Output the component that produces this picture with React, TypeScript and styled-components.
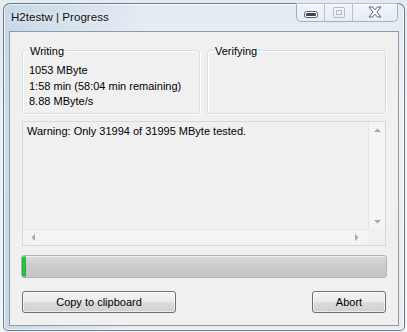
import React from "react";
import styled, { createGlobalStyle } from "styled-components";

const FONT = `"Liberation Sans", Arial, sans-serif`;

const Global = createGlobalStyle`
  html, body { margin: 0; padding: 0; }
  body {
    background: linear-gradient(180deg, #e4eaf0 0%, #eef1f4 40%, #f2f4f6 100%);
    font-family: ${FONT};
    font-size: 11px;
    color: #000;
  }
`;

const Page = styled.div`
  width: 407px;
  height: 332px;
  padding: 3px 0 0 3px;
  box-sizing: border-box;
  overflow: hidden;
`;

const Win = styled.div`
  width: 402px;
  height: 328px;
  box-sizing: border-box;
  border: 1px solid rgba(70, 85, 100, 0.75);
  border-radius: 7px 7px 5px 5px;
  background:
    linear-gradient(90deg, rgba(170, 195, 220, 0.5) 0%, rgba(255, 255, 255, 0) 35%),
    linear-gradient(180deg, #e3ebf3 0%, #edf2f7 30%, #e8eef4 100%);
  box-shadow: inset 0 0 0 1px rgba(255, 255, 255, 0.7);
  padding: 0 5px 4px 5px;
  display: flex;
  flex-direction: column;
`;

const TitleBar = styled.div`
  height: 27px;
  display: flex;
  justify-content: space-between;
  align-items: flex-start;
`;

const Title = styled.div`
  margin-left: 2px;
  line-height: 26px;
  font-size: 11.6px;
  color: #111;
  text-shadow: 0 0 6px rgba(255, 255, 255, 0.9);
`;

const CaptionGroup = styled.div`
  display: flex;
  height: 18px;
  margin-right: 1px;
  margin-top: -1px;
  border: 1px solid #a7b1bc;
  border-top: none;
  border-radius: 0 0 5px 5px;
  overflow: hidden;
  background: linear-gradient(180deg, rgba(255,255,255,0.5), rgba(230,238,246,0.6));
`;

const CapBtn = styled.div<{ $w: number; $sep?: boolean }>`
  width: ${(p) => p.$w}px;
  box-sizing: border-box;
  height: 100%;
  display: flex;
  align-items: center;
  justify-content: center;
  border-left: ${(p) => (p.$sep ? "1px solid #b8c1cb" : "none")};
`;

const Client = styled.div`
  flex: 1;
  background: #f0f0f0;
  border: 1px solid #8e9aa6;
  padding: 11px 12px 12px 12px;
  display: flex;
  flex-direction: column;
`;

const Groups = styled.div`
  display: grid;
  grid-template-columns: 178px 179px;
  column-gap: 7px;
`;

const Group = styled.fieldset`
  margin: 0;
  height: 71px;
  box-sizing: border-box;
  border: 1px solid #d5dfe5;
  border-radius: 3px;
  box-shadow: inset 1px 1px 0 #fff, 1px 1px 0 #fff;
  padding: 6px 6px 0 6px;
  min-width: 0;
`;

const Legend = styled.legend`
  padding: 0 1px;
  line-height: 14px;
  font-size: 11px;
  position: relative;
  top: 1px;
`;

const Line = styled.div`
  line-height: 15.5px;
  white-space: nowrap;
`;

const Log = styled.div`
  margin-top: 7px;
  height: 125px;
  box-sizing: border-box;
  border: 1px solid #d8d8d8;
  display: grid;
  grid-template-columns: 1fr 17px;
  grid-template-rows: 1fr 16px;
  background: #f0f0f0;
`;

const LogText = styled.div`
  padding: 2px 4px;
  line-height: 15px;
  white-space: nowrap;
  overflow: hidden;
`;

const VScroll = styled.div`
  background: #f4f4f4;
  border-left: 1px solid #e6e6e6;
  display: flex;
  flex-direction: column;
  justify-content: space-between;
  align-items: center;
  padding: 6px 0 5px;
`;

const HScroll = styled.div`
  background: #f4f4f4;
  border-top: 1px solid #e6e6e6;
  display: flex;
  justify-content: space-between;
  align-items: center;
  padding: 0 9px 0 8px;
`;

const Corner = styled.div`
  background: #f0f0f0;
`;

const Progress = styled.div`
  margin: 9px -1px 0;
  height: 23px;
  box-sizing: border-box;
  border: 1px solid #b3b3b3;
  border-radius: 3px;
  background: linear-gradient(180deg, #dcdcdc 0%, #cbcbcb 45%, #c6c6c6 100%);
  box-shadow: inset 0 1px 0 #ededed;
  display: flex;
  overflow: hidden;
`;

const Chunk = styled.div`
  background: linear-gradient(90deg, #19a531 0%, #2ed24e 50%, #19a531 100%);
  border-radius: 2px;
`;

const ButtonRow = styled.div`
  margin-top: 13px;
  display: flex;
  justify-content: space-between;
`;

const Button = styled.button<{ $w: number }>`
  width: ${(p) => p.$w}px;
  height: 22px;
  box-sizing: border-box;
  border: 1px solid #707070;
  border-radius: 3px;
  background: linear-gradient(180deg, #f3f3f3 0%, #ebebeb 48%, #dddddd 52%, #cfcfcf 100%);
  box-shadow: inset 0 0 0 1px rgba(255, 255, 255, 0.6);
  font-family: ${FONT};
  font-size: 11px;
  color: #000;
  padding: 0;
  line-height: 18px;
`;

const Arrow = ({ dir }: { dir: "up" | "down" | "left" | "right" }) => {
  const pts =
    dir === "up"
      ? "0,4 3.5,0.5 7,4"
      : dir === "down"
      ? "0,0 7,0 3.5,3.5"
      : dir === "left"
      ? "4,0 4,7 0.5,3.5"
      : "0,0 0,7 3.5,3.5";
  const w = dir === "up" || dir === "down" ? 7 : 4;
  const h = dir === "up" || dir === "down" ? 4 : 7;
  return (
    <svg width={w} height={h} viewBox={`0 0 ${w} ${h}`}>
      <polygon points={pts} fill="#a8a8a8" />
    </svg>
  );
};

export default function App() {
  return (
    <>
      <Global />
      <Page>
        <Win>
          <TitleBar>
            <Title>H2testw | Progress</Title>
            <CaptionGroup>
              <CapBtn $w={27}>
                <svg width="14" height="7" viewBox="0 0 14 7" style={{ marginTop: 5 }}>
                  <rect x="0.5" y="0.5" width="13" height="6" rx="2" fill="#fff" stroke="#55606c" />
                  <rect x="2" y="2" width="10" height="3" rx="1" fill="#3c4652" />
                </svg>
              </CapBtn>
              <CapBtn $w={28} $sep>
                <svg width="12" height="11" viewBox="0 0 12 11">
                  <rect x="0.5" y="0.5" width="11" height="10" rx="1" fill="none" stroke="#b2bac4" />
                  <rect x="3.5" y="3.5" width="5" height="4" fill="none" stroke="#b2bac4" />
                </svg>
              </CapBtn>
              <CapBtn $w={45} $sep>
                <svg width="14" height="12" viewBox="0 0 14 12">
                  <path
                    d="M1 1 L4.5 1 L7 3.8 L9.5 1 L13 1 L9 6 L13 11 L9.5 11 L7 8.2 L4.5 11 L1 11 L5 6 Z"
                    fill="#f6f8fa"
                    stroke="#5a6470"
                    strokeWidth="1"
                    strokeLinejoin="round"
                  />
                </svg>
              </CapBtn>
            </CaptionGroup>
          </TitleBar>
          <Client>
            <Groups>
              <Group>
                <Legend>Writing</Legend>
                <Line>1053 MByte</Line>
                <Line>1:58 min (58:04 min remaining)</Line>
                <Line>8.88 MByte/s</Line>
              </Group>
              <Group>
                <Legend>Verifying</Legend>
              </Group>
            </Groups>
            <Log>
              <LogText>Warning: Only 31994 of 31995 MByte tested.</LogText>
              <VScroll>
                <Arrow dir="up" />
                <Arrow dir="down" />
              </VScroll>
              <HScroll>
                <Arrow dir="left" />
                <Arrow dir="right" />
              </HScroll>
              <Corner />
            </Log>
            <Progress>
              <Chunk style={{ width: `${(1053 / 31995) * 100 * 0.35}%` }} />
            </Progress>
            <ButtonRow>
              <Button $w={154}>Copy to clipboard</Button>
              <Button $w={74}>Abort</Button>
            </ButtonRow>
          </Client>
        </Win>
      </Page>
    </>
  );
}
